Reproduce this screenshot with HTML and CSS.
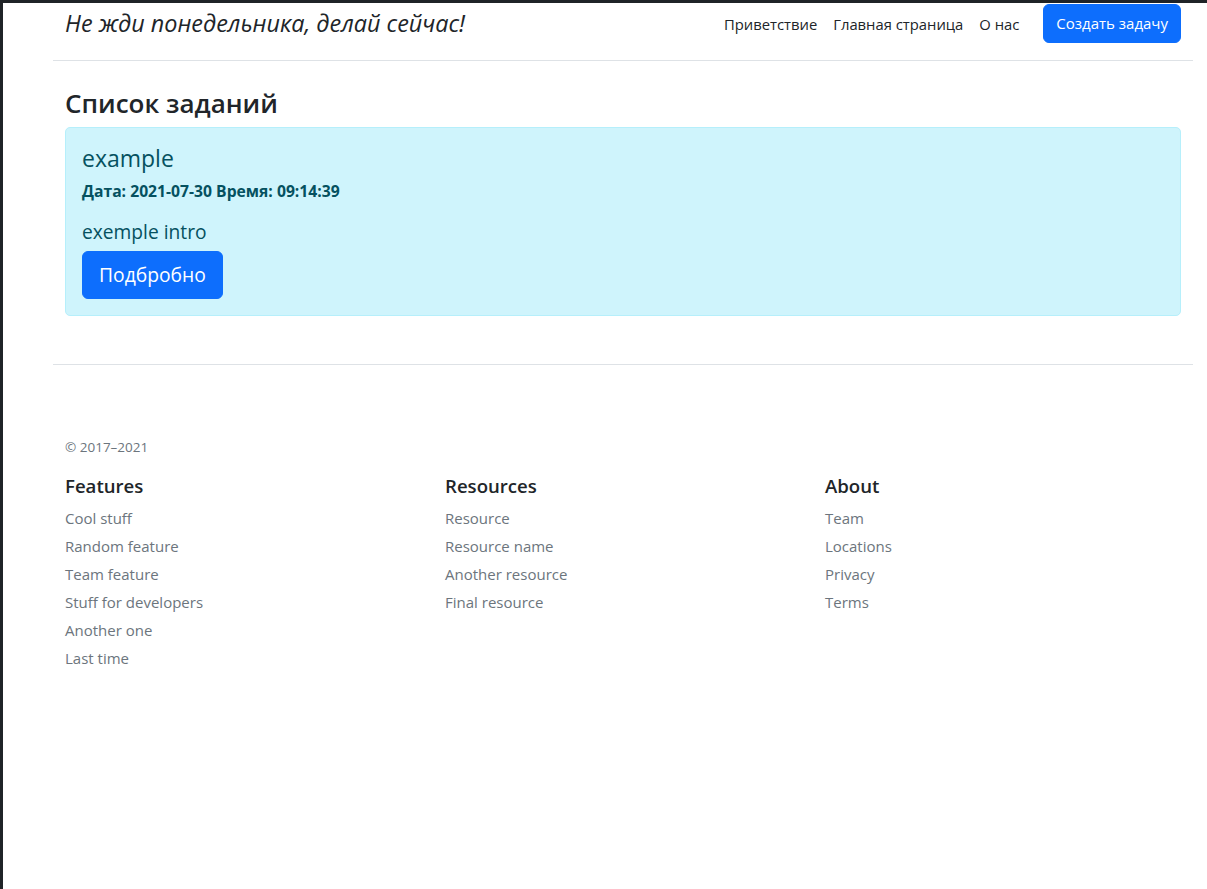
FILE: index.html
```html
<!DOCTYPE html>
<html lang="ru">
<head>
<meta charset="utf-8">
<title>Список заданий</title>
<link rel="stylesheet" href="styles.css">
</head>
<body>
<div class="page">
  <header class="site-header">
    <span class="brand">Не жди понедельника, делай сейчас!</span>
    <nav class="nav">
      <a href="#">Приветствие</a>
      <a href="#">Главная страница</a>
      <a href="#">О нас</a>
    </nav>
    <a class="btn" href="#">Создать задачу</a>
  </header>

  <main class="content">
    <h3 class="list-title">Список заданий</h3>
    <div class="alert">
      <h4 class="task-title">example</h4>
      <h6 class="task-date">Дата: 2021-07-30 Время: 09:14:39</h6>
      <h5 class="task-intro">exemple intro</h5>
      <a class="btn btn-lg" href="#">Подбробно</a>
    </div>
  </main>

  <footer class="site-footer">
    <small class="copy">© 2017–2021</small>
    <div class="cols">
      <div class="col">
        <h5>Features</h5>
        <ul>
          <li><a href="#">Cool stuff</a></li>
          <li><a href="#">Random feature</a></li>
          <li><a href="#">Team feature</a></li>
          <li><a href="#">Stuff for developers</a></li>
          <li><a href="#">Another one</a></li>
          <li><a href="#">Last time</a></li>
        </ul>
      </div>
      <div class="col">
        <h5>Resources</h5>
        <ul>
          <li><a href="#">Resource</a></li>
          <li><a href="#">Resource name</a></li>
          <li><a href="#">Another resource</a></li>
          <li><a href="#">Final resource</a></li>
        </ul>
      </div>
      <div class="col">
        <h5>About</h5>
        <ul>
          <li><a href="#">Team</a></li>
          <li><a href="#">Locations</a></li>
          <li><a href="#">Privacy</a></li>
          <li><a href="#">Terms</a></li>
        </ul>
      </div>
    </div>
  </footer>
</div>
</body>
</html>
```

FILE: styles.css
```css
html {
  background: #1f2327;
}
body {
  margin: 3px 0 0 3px;
  min-height: calc(100vh - 3px);
  background: #ffffff;
  font-family: "Open Sans", "Noto Sans", "Liberation Sans", sans-serif;
  font-size: 15px;
  line-height: 24px;
  color: #212529;
}
a {
  text-decoration: none;
}
h3, h4, h5, h6 {
  margin: 0;
  font-weight: 600;
  line-height: 1.2;
}
.page {
  width: 1140px;
  margin-left: 50px;
}

/* header */
.site-header {
  display: flex;
  align-items: center;
  padding: 1px 12px 17px;
  border-bottom: 1px solid #dee2e6;
}
.brand {
  font-size: 23.4px;
  font-style: italic;
  line-height: 1.2;
  color: #212529;
}
.nav {
  display: flex;
  gap: 16px;
  margin-left: auto;
  margin-right: 24px;
}
.nav a {
  color: #212529;
  font-size: 14.8px;
}
.btn {
  display: inline-block;
  padding: 6px 12px;
  line-height: 25px;
  font-size: 15px;
  color: #ffffff;
  background: #0d6efd;
  border: 1px solid #0d6efd;
  border-radius: 6px;
}
.btn-lg {
  padding: 8px 16px;
  font-size: 19.3px;
  line-height: 30px;
  border-radius: 6px;
}

/* content */
.content {
  padding: 0 12px;
}
.list-title {
  margin: 26px 0 7px;
  font-size: 26px;
  line-height: 33px;
}
.alert {
  padding: 16px;
  background: #cff4fc;
  border: 1px solid #b6effb;
  border-radius: 5px;
  color: #055160;
}
.task-title {
  font-size: 23px;
  line-height: 29px;
  font-weight: 500;
  margin-bottom: 9px;
}
.task-date {
  font-size: 15.7px;
  font-weight: 700;
  line-height: 19px;
  margin-bottom: 19px;
}
.task-intro {
  font-size: 19.2px;
  font-weight: 500;
  line-height: 24px;
  margin-bottom: 7px;
}

/* footer */
.site-footer {
  margin-top: 48px;
  padding-top: 48px;
  border-top: 1px solid #dee2e6;
}
.copy {
  display: block;
  margin: 24px 12px 16px;
  font-size: 13.5px;
  line-height: 21px;
  color: #6c757d;
}
.cols {
  display: grid;
  grid-template-columns: repeat(3, 380px);
}
.col {
  padding: 0 12px;
}
.col h5 {
  font-size: 18.6px;
  line-height: 24px;
  margin-bottom: 8px;
  color: #212529;
}
.col ul {
  list-style: none;
  margin: 0;
  padding: 0;
}
.col li {
  margin-bottom: 4px;
  line-height: 24px;
}
.col a {
  color: #6c757d;
}
```
